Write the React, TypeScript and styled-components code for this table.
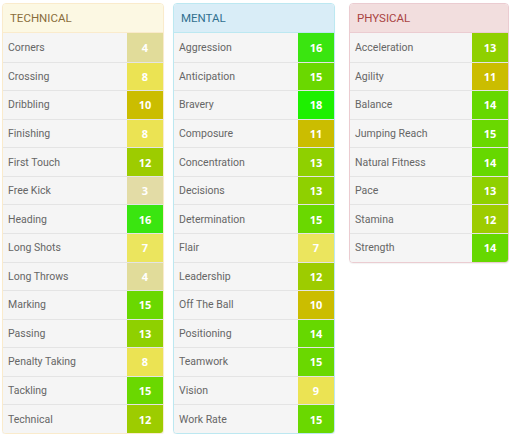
import React from "react";
import styled, { createGlobalStyle } from "styled-components";

const Global = createGlobalStyle`
  html, body { margin: 0; padding: 0; background: #fff; }
  body { font-family: Roboto, "Liberation Sans", Arial, sans-serif; }
`;

type Variant = "warning" | "info" | "danger";

const variants: Record<Variant, { bg: string; border: string; text: string }> = {
  warning: { bg: "#fcf8e3", border: "#faebcc", text: "#8a6d3b" },
  info: { bg: "#d9edf7", border: "#bce8f1", text: "#31708f" },
  danger: { bg: "#f2dede", border: "#ebccd1", text: "#a94442" },
};

const Page = styled.div`
  display: grid;
  grid-template-columns: 162px 162px 1fr;
  column-gap: 9px;
  align-items: start;
  padding: 3px 3px 0 2px;
  width: 512px;
  box-sizing: border-box;
`;

const Panel = styled.section<{ $variant: Variant; $offset?: number }>`
  border: 1px solid ${(p) => variants[p.$variant].border};
  border-radius: 4px;
  background: #fff;
  box-shadow: 0 1px 1px rgba(0, 0, 0, 0.05);
  overflow: hidden;
  margin-left: ${(p) => p.$offset ?? 0}px;
`;

const Header = styled.div<{ $variant: Variant }>`
  height: 29px;
  box-sizing: border-box;
  display: flex;
  align-items: center;
  padding: 0 7px;
  background: ${(p) => variants[p.$variant].bg};
  color: ${(p) => variants[p.$variant].text};
  border-bottom: 1px solid ${(p) => variants[p.$variant].border};
  font-size: 11.5px;
`;

const Row = styled.div`
  display: flex;
  height: 28.57px;
  box-sizing: border-box;
  border-top: 1px solid #e4e4e4;
  &:first-child { border-top: none; }
`;

const Label = styled.div`
  flex: 1;
  display: flex;
  align-items: center;
  padding-left: 5px;
  background: #f5f5f5;
  color: #666;
  font-size: 10.5px;
`;

const Score = styled.div<{ $bg: string }>`
  width: 36px;
  display: flex;
  align-items: center;
  justify-content: center;
  background: ${(p) => p.$bg};
  color: #fff;
  font-weight: 700;
  font-size: 11px;
  font-family: "Open Sans", Roboto, sans-serif;
`;

const colors: Record<number, string> = {
  3: "#e3dca6",
  4: "#e1dc9a",
  7: "#ebe55e",
  8: "#ebe353",
  9: "#ebe353",
  10: "#cbbd00",
  11: "#cbbd00",
  12: "#9dcc00",
  13: "#8fd000",
  14: "#66d800",
  15: "#6ad800",
  16: "#3ae510",
  18: "#1ef000",
};

const technical: [string, number][] = [
  ["Corners", 4],
  ["Crossing", 8],
  ["Dribbling", 10],
  ["Finishing", 8],
  ["First Touch", 12],
  ["Free Kick", 3],
  ["Heading", 16],
  ["Long Shots", 7],
  ["Long Throws", 4],
  ["Marking", 15],
  ["Passing", 13],
  ["Penalty Taking", 8],
  ["Tackling", 15],
  ["Technical", 12],
];

const mental: [string, number][] = [
  ["Aggression", 16],
  ["Anticipation", 15],
  ["Bravery", 18],
  ["Composure", 11],
  ["Concentration", 13],
  ["Decisions", 13],
  ["Determination", 15],
  ["Flair", 7],
  ["Leadership", 12],
  ["Off The Ball", 10],
  ["Positioning", 14],
  ["Teamwork", 15],
  ["Vision", 9],
  ["Work Rate", 15],
];

const physical: [string, number][] = [
  ["Acceleration", 13],
  ["Agility", 11],
  ["Balance", 14],
  ["Jumping Reach", 15],
  ["Natural Fitness", 14],
  ["Pace", 13],
  ["Stamina", 12],
  ["Strength", 14],
];

const AttrPanel = ({
  title,
  variant,
  items,
  offset,
}: {
  title: string;
  variant: Variant;
  items: [string, number][];
  offset?: number;
}) => (
  <Panel $variant={variant} $offset={offset}>
    <Header $variant={variant}>{title}</Header>
    <div>
      {items.map(([name, v]) => (
        <Row key={name}>
          <Label>{name}</Label>
          <Score $bg={colors[v]}>{v}</Score>
        </Row>
      ))}
    </div>
  </Panel>
);

export default function App() {
  return (
    <>
      <Global />
      <Page>
        <AttrPanel title="TECHNICAL" variant="warning" items={technical} />
        <AttrPanel title="MENTAL" variant="info" items={mental} />
        <AttrPanel title="PHYSICAL" variant="danger" items={physical} offset={5} />
      </Page>
    </>
  );
}
